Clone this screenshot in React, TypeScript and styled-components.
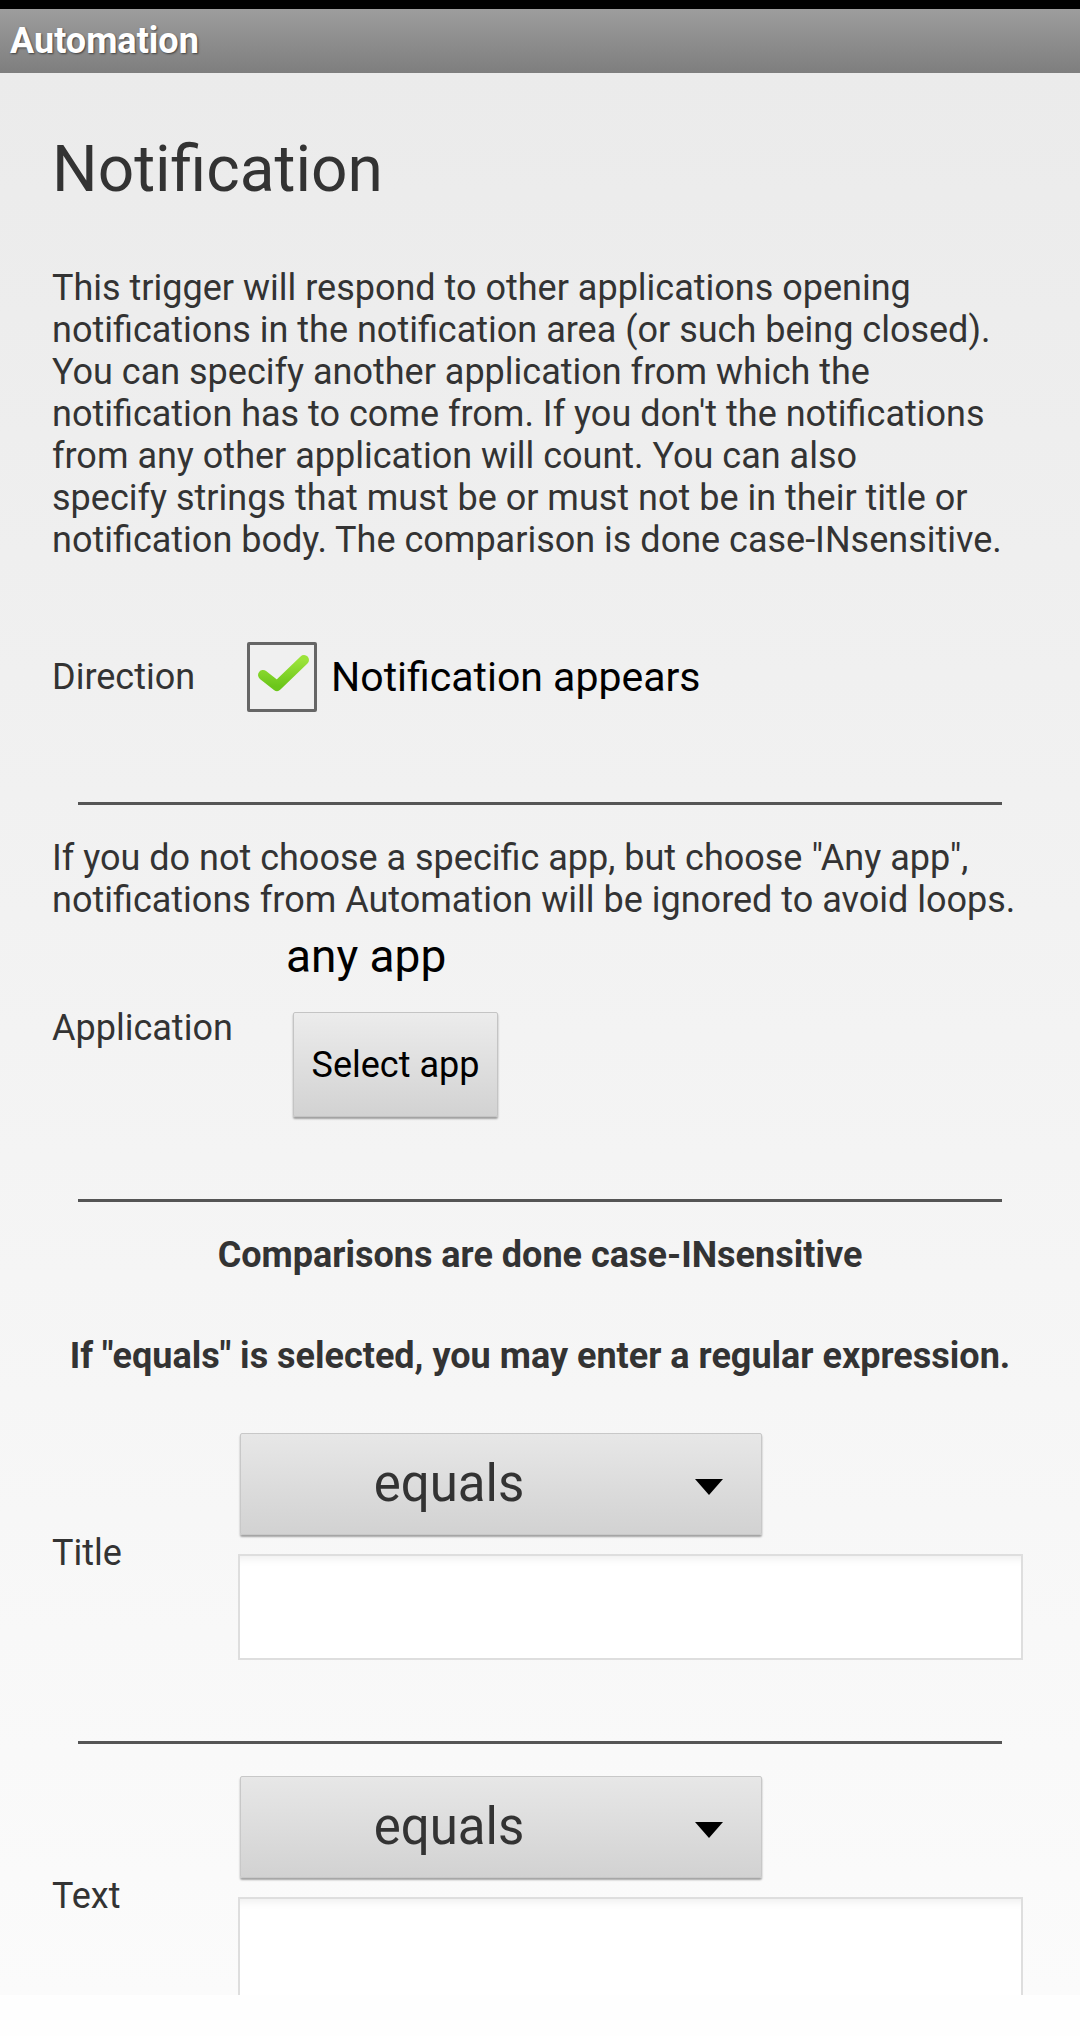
import React from "react";
import styled, { createGlobalStyle } from "styled-components";

const GlobalStyle = createGlobalStyle`
  html, body {
    margin: 0;
    padding: 0;
  }
  body {
    font-family: Roboto, "Noto Sans", sans-serif;
    background: #fefefe;
  }
`;

const Screen = styled.div`
  width: 1080px;
  height: 2036px;
  display: flex;
  flex-direction: column;
  overflow: hidden;
`;

const StatusBar = styled.div`
  height: 9px;
  flex-shrink: 0;
  background: #000;
`;

const TitleBar = styled.header`
  height: 64px;
  flex-shrink: 0;
  display: flex;
  align-items: center;
  padding-left: 10px;
  background: linear-gradient(#9d9d9d, #7e7e7e);
  color: #fff;
  font-size: 36px;
  font-weight: 700;
  text-shadow: 1px 1px 2px rgba(0, 0, 0, 0.55);
`;

const Scroll = styled.main`
  height: 1922px;
  flex-shrink: 0;
  overflow: hidden;
  box-sizing: border-box;
  padding: 0 52px;
  background: linear-gradient(#ebebeb, #fbfbfb);
`;

const BottomStrip = styled.div`
  flex: 1;
  background: #fefefe;
`;

const Heading = styled.h1`
  margin: 60px 0 0;
  font-size: 64px;
  line-height: 74px;
  font-weight: 400;
  color: #333;
`;

const Para = styled.p<{ $top: number }>`
  margin: ${(p) => p.$top}px 0 0;
  font-size: 36px;
  line-height: 42px;
  color: #333;
`;

const Row = styled.div<{ $top: number }>`
  display: flex;
  align-items: center;
  margin-top: ${(p) => p.$top}px;
`;

const Label = styled.div<{ $width: number; $shift?: number }>`
  width: ${(p) => p.$width}px;
  flex-shrink: 0;
  padding-top: ${(p) => p.$shift ?? 0}px;
  font-size: 36px;
  line-height: 42px;
  color: #333;
`;

const CheckBox = styled.span`
  width: 70px;
  height: 70px;
  box-sizing: border-box;
  border: 3px solid #666;
  border-radius: 2px;
  background: #f0f0f0;
  display: flex;
`;

const CheckLabel = styled.span`
  margin-left: 14px;
  font-size: 41px;
  line-height: 46px;
  color: #000;
`;

const Divider = styled.hr<{ $top: number }>`
  height: 3px;
  border: none;
  margin: ${(p) => p.$top}px 26px 0;
  background: #555;
`;

const Column = styled.div`
  display: flex;
  flex-direction: column;
  align-items: flex-start;
`;

const AppName = styled.div`
  font-size: 46px;
  line-height: 46px;
  color: #000;
`;

const Button = styled.button`
  margin: 33px 0 0 7px;
  width: 205px;
  height: 105px;
  border: 1px solid #c4c4c4;
  border-radius: 2px;
  background: linear-gradient(#ececec, #d2d2d2);
  box-shadow: 0 2px 2px rgba(0, 0, 0, 0.35);
  font-family: Roboto, sans-serif;
  font-size: 36px;
  color: #000;
  padding: 0;
`;

const Note = styled.p<{ $top: number }>`
  margin: ${(p) => p.$top}px 0 0;
  text-align: center;
  font-size: 36px;
  line-height: 42px;
  font-weight: 700;
  color: #333;
`;

const Spinner = styled.div`
  width: 522px;
  height: 102px;
  margin-left: 2px;
  box-sizing: border-box;
  display: flex;
  align-items: center;
  border: 1px solid #c8c8c8;
  border-radius: 2px;
  background: linear-gradient(#e7e7e7, #d2d2d2);
  box-shadow: 0 2px 2px rgba(0, 0, 0, 0.35);
`;

const SpinnerText = styled.span`
  flex: 1;
  text-align: center;
  font-size: 51px;
  line-height: 60px;
  color: #333;
`;

const Arrow = styled.svg`
  margin: 6px 38px 0;
`;

const TextInput = styled.div`
  width: 785px;
  height: 106px;
  margin-top: 19px;
  box-sizing: border-box;
  border: 2px solid #dedede;
  background: #fff;
  box-shadow: inset 0 10px 10px -8px rgba(0, 0, 0, 0.08);
`;

const Check = () => (
  <svg width="64" height="64" viewBox="0 0 64 64">
    <defs>
      <linearGradient id="chk" x1="0" y1="0" x2="0" y2="1">
        <stop offset="0" stopColor="#9be33a" />
        <stop offset="1" stopColor="#6cc61a" />
      </linearGradient>
    </defs>
    <polyline
      points="13,30 27,41 54,15"
      fill="none"
      stroke="url(#chk)"
      strokeWidth="10"
      strokeLinecap="round"
      strokeLinejoin="round"
    />
  </svg>
);

const Select = ({ value }: { value: string }) => (
  <Spinner>
    <SpinnerText>{value}</SpinnerText>
    <Arrow width="28" height="16" viewBox="0 0 28 16">
      <polygon points="0,0 28,0 14,16" fill="#000" />
    </Arrow>
  </Spinner>
);

export default function App() {
  return (
    <Screen>
      <GlobalStyle />
      <StatusBar />
      <TitleBar>Automation</TitleBar>
      <Scroll>
        <Heading>Notification</Heading>
        <Para $top={60}>
          This trigger will respond to other applications opening
          <br />
          notifications in the notification area (or such being closed).
          <br />
          You can specify another application from which the
          <br />
          notification has to come from. If you don't the notifications
          <br />
          from any other application will count. You can also
          <br />
          specify strings that must be or must not be in their title or
          <br />
          notification body. The comparison is done case-INsensitive.
        </Para>

        <Row $top={81}>
          <Label $width={195}>Direction</Label>
          <CheckBox>
            <Check />
          </CheckBox>
          <CheckLabel>Notification appears</CheckLabel>
        </Row>

        <Divider $top={90} />

        <Para $top={32}>
          If you do not choose a specific app, but choose "Any app", notifications from
          Automation will be ignored to avoid loops.
        </Para>

        <Row $top={12}>
          <Label $width={234} $shift={6}>
            Application
          </Label>
          <Column>
            <AppName>any app</AppName>
            <Button>Select app</Button>
          </Column>
        </Row>

        <Divider $top={82} />

        <Note $top={32}>Comparisons are done case-INsensitive</Note>
        <Note $top={59}>If "equals" is selected, you may enter a regular expression.</Note>

        <Row $top={56}>
          <Label $width={186} $shift={12}>
            Title
          </Label>
          <Column>
            <Select value="equals" />
            <TextInput />
          </Column>
        </Row>

        <Divider $top={81} />

        <Row $top={32}>
          <Label $width={186} $shift={12}>
            Text
          </Label>
          <Column>
            <Select value="equals" />
            <TextInput />
          </Column>
        </Row>
      </Scroll>
      <BottomStrip />
    </Screen>
  );
}
